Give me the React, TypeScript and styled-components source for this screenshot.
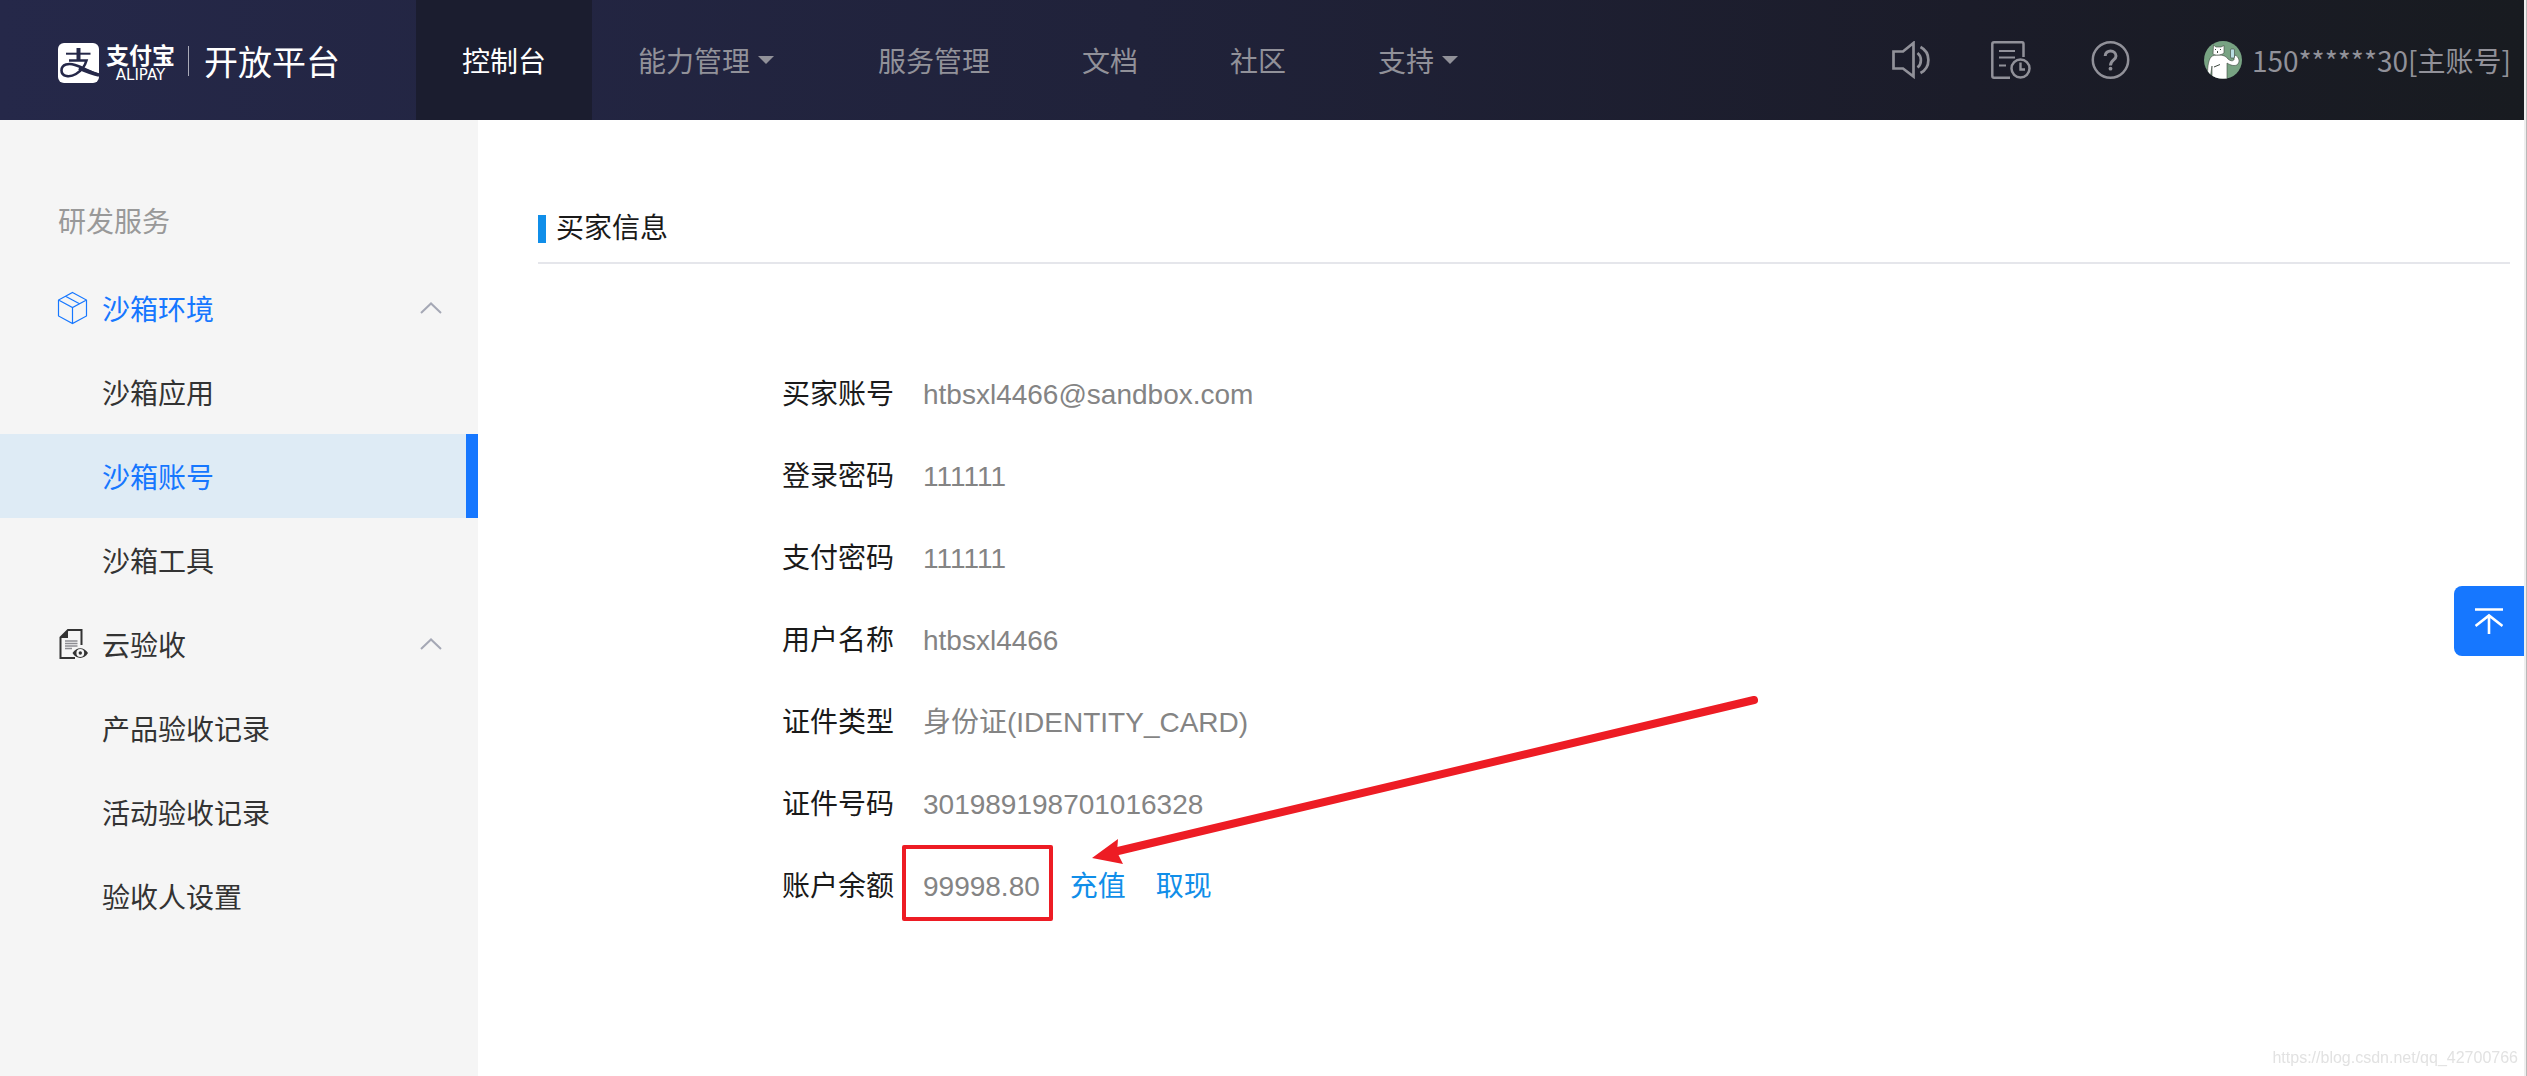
import React from "react";
import styled, { createGlobalStyle, css } from "styled-components";

const latin = `"Liberation Sans", "Noto Sans CJK SC", sans-serif`;
const cjk = `"Noto Sans CJK SC", "Liberation Sans", sans-serif`;

const GlobalStyle = createGlobalStyle`
  * { box-sizing: border-box; }
  body { margin: 0; background: #fff; font-family: ${latin}; font-size: 28px; line-height: 42px; color: #1a1a1a; }
  a { text-decoration: none; color: inherit; }
  button { font: inherit; color: inherit; border: 0; margin: 0; padding: 0; background: none; cursor: pointer; }
  ul, dl, dd, h1, h2 { margin: 0; padding: 0; list-style: none; }
  svg { display: block; flex: none; }
`;

const Page = styled.div`
  min-height: 100vh;
  display: flex;
  flex-direction: column;
  padding-right: 2px;
  border-right: 1px solid #b9b9b9;
  background: #eeeeee;
`;

const Header = styled.header`
  display: flex;
  height: 120px;
  background: linear-gradient(90deg, #252849 0%, #20223a 45%, #1b1c29 78%, #181b20 100%);
  font-family: ${cjk};
  color: #919199;
`;

const Brand = styled.a`
  display: flex;
  align-items: center;
  width: 416px;
  padding: 6px 0 0 58px;
  color: #fff;
`;

const WordMark = styled.span`
  display: flex;
  flex-direction: column;
  align-items: center;
  margin-left: 7px;
  font-size: 23px;
  font-weight: 700;
  line-height: 24px;
`;

const Latin = styled.span`
  font-family: "DejaVu Sans", sans-serif;
  font-size: 15px;
  font-weight: 400;
  line-height: 18px;
`;

const ProductName = styled.span`
  display: flex;
  align-items: center;
  height: 30px;
  margin: 0 0 4px 13px;
  padding-left: 15px;
  border-left: 1px solid #a9aab8;
  font-size: 34px;
  line-height: 34px;
`;

const Nav = styled.nav`
  display: flex;
`;

const NavItem = styled.a<{ $active?: boolean }>`
  display: flex;
  align-items: center;
  padding: 0 46px;
  white-space: nowrap;
  ${(p) => p.$active && css`
    background: #1b1d2f;
    color: #fff;
  `}
`;

const Caret = styled.span`
  margin: 0 12px 0 8px;
  border: 8px solid transparent;
  border-top-color: currentColor;
  border-bottom-width: 0;
`;

const Tools = styled.div`
  display: flex;
  align-items: center;
  gap: 60px;
  margin-left: auto;
  padding-right: 13px;
`;

const Account = styled.button`
  display: flex;
  align-items: center;
  gap: 10px;
  margin-left: 14px;
  white-space: nowrap;
`;

const Body = styled.div`
  flex: 1;
  display: grid;
  grid-template-columns: 478px 1fr;
  background: #fff;
`;

const Sidebar = styled.aside`
  padding-top: 58px;
  background: #f5f5f5;
  font-family: ${cjk};
  color: #333;
`;

const SideTitle = styled.h2`
  height: 88px;
  padding-left: 58px;
  font-size: 28px;
  font-weight: 400;
  line-height: 84px;
  color: #999;
`;

const GroupButton = styled.button<{ $active?: boolean }>`
  display: flex;
  align-items: center;
  width: 100%;
  height: 84px;
  padding: 0 36px 0 57px;
  color: ${(p) => (p.$active ? "#1677ff" : "inherit")};
`;

const GroupIcon = styled.span`
  width: 45px;
`;

const GroupArrow = styled.span`
  margin-left: auto;
  color: #a5a8b5;
`;

const SideLink = styled.a<{ $active?: boolean }>`
  display: flex;
  align-items: center;
  height: 84px;
  padding-left: 102px;
  border-right: 12px solid transparent;
  ${(p) => p.$active && css`
    background: #deebf5;
    border-right-color: #1677ff;
    color: #1677ff;
  `}
`;

const Main = styled.main`
  padding: 88px 14px 0 60px;
`;

const SectionHead = styled.div`
  display: flex;
  align-items: center;
  gap: 10px;
  height: 56px;
  padding-bottom: 12px;
  border-bottom: 2px solid #e5e6eb;

  &::before {
    content: "";
    width: 8px;
    height: 28px;
    background: #108ee9;
  }
`;

const SectionTitle = styled.h1`
  font-size: 28px;
  font-weight: 400;
`;

const Details = styled.dl`
  padding: 90px 0 0 244px;
`;

const Row = styled.div`
  display: flex;
  align-items: center;
  height: 82px;
`;

const Term = styled.dt`
  width: 141px;
`;

const Value = styled.dd`
  position: relative;
  display: flex;
  gap: 30px;
  color: #848484;
`;

const Action = styled.a`
  color: #108ee9;
`;

const Highlight = styled.span`
  position: absolute;
  left: -21px;
  top: -21px;
  width: 151px;
  height: 76px;
  border: 4px solid #ed1c24;
  border-radius: 2px;
  pointer-events: none;
`;

const Pointer = styled.svg`
  position: absolute;
  left: 169px;
  bottom: 43px;
  pointer-events: none;
`;

const BackTop = styled.button`
  position: fixed;
  right: 3px;
  top: 586px;
  display: grid;
  place-items: center;
  width: 70px;
  height: 70px;
  border-radius: 8px 0 0 8px;
  background: #1677ff;
`;

const Watermark = styled.span`
  position: fixed;
  right: 9px;
  bottom: 8px;
  font-size: 16px;
  line-height: 20px;
  color: #e2e2e2;
`;

const LogoMark = () => (
  <svg width="41" height="40" viewBox="0 0 41 40" fill="none" aria-hidden="true">
    <rect width="41" height="40" rx="6" fill="#fff" />
    <g stroke="#252849">
      <path d="M20.500 5V17" strokeWidth="4" />
      <path d="M8 10.700H32.500" strokeWidth="2" />
      <path d="M11 17.500H28.500C27 23 23 28 18 31C12 34.500 3.500 34 3.500 27.500C3.500 21 11 20 17 22C25 24.500 32 29 41 32" strokeWidth="2.600" />
      <path d="M21 25C28 28 34 30.500 41 32" strokeWidth="3.600" />
    </g>
  </svg>
);

const Speaker = () => (
  <svg width="39" height="38" viewBox="0 0 39 38" fill="none" stroke="currentColor" strokeWidth="2.700">
    <path d="M1.500 10.500H11L21.500 2V35.500L11 27.500H1.500Z" />
    <path d="M25.500 12C30 15.500 30 23 25.500 26.500" />
    <path d="M28.500 6C39 11.500 39 26.500 28.500 32" />
  </svg>
);

const Orders = () => (
  <svg width="40" height="38" viewBox="0 0 40 38" fill="none" stroke="currentColor" strokeWidth="2.500">
    <path d="M32.500 16V3Q32.500 1.300 31 1.300H3Q1.300 1.300 1.300 3V35Q1.300 36.700 3 36.700H19" />
    <path d="M8 10H24M8 16.500H24M8 24.500H15" strokeWidth="2" />
    <circle cx="29.500" cy="27.500" r="9" />
    <path d="M29.500 21.500V28.500H34" strokeWidth="2.400" />
  </svg>
);

const Help = () => (
  <svg width="39" height="38" viewBox="0 0 39 38" fill="none" stroke="currentColor" strokeWidth="2.500">
    <circle cx="19.500" cy="19" r="17.700" />
    <path d="M14.200 15C14.200 8.300 25 8.500 25 15C25 19 19.500 19 19.500 24.500" strokeWidth="3" />
    <circle cx="19.500" cy="27.700" r="1.900" fill="currentColor" stroke="none" />
  </svg>
);

const Avatar = () => (
  <svg width="38" height="38" viewBox="0 0 38 38" aria-hidden="true">
    <defs>
      <clipPath id="avatar-round"><circle cx="19" cy="19" r="19" /></clipPath>
    </defs>
    <g clipPath="url(#avatar-round)" stroke="#3c473e" strokeWidth="0.600">
      <rect width="38" height="38" fill="#78a383" stroke="none" />
      <path d="M4 38C3 28 4 20 7 16C9 14 12 14 15 14C19 14 22 15 24 18C27 21 31 20 30 17L31 14C35 16 36 20 34 23C31 26 26 24 23 22L23 38H8L8 25L6 38Z" fill="#fff" />
      <path d="M9 13L9.500 4L12 6H17L20 4.500V12C17 14.500 11 14.500 9 13Z" fill="#fff" />
      <path d="M11 8.500H12M16 8.500H17M13.500 10V12" strokeWidth="1" />
      <rect x="26.500" y="8" width="4" height="9" rx="1" fill="#b9dde3" />
      <path d="M10 26L16 23.500" strokeWidth="1" />
    </g>
  </svg>
);

const BoxIcon = () => (
  <svg width="31" height="34" viewBox="0 0 31 34" fill="none" stroke="currentColor" strokeWidth="1.200">
    <path d="M15.500 1.500L29.500 9V25L15.500 32.500L1.500 25V9ZM1.500 9L15.500 16.500L29.500 9M15.500 16.500V32.500M8.500 5.300L22.500 12.800" />
  </svg>
);

const ReviewIcon = () => (
  <svg width="31" height="32" viewBox="0 0 31 32" fill="none">
    <path d="M24.500 17V2H11L3.500 9.500V30H18" stroke="#333" strokeWidth="2" />
    <path d="M3 10L11 2V10Z" fill="#333" />
    <path d="M8 13H20.500M8 15.500H20.500M8 18H20.500M8 20.500H15" stroke="#8d8d92" strokeWidth="1.600" />
    <path d="M15.500 25C19.500 18.500 27 18.500 31 25C27 31.500 19.500 31.500 15.500 25Z" fill="#333" />
    <circle cx="23.300" cy="25" r="3.900" fill="#f5f5f5" />
    <circle cx="23.300" cy="25" r="1.700" fill="#333" />
  </svg>
);

const Chevron = () => (
  <svg width="22" height="12" viewBox="0 0 22 12" fill="none" stroke="currentColor" strokeWidth="2">
    <path d="M1 11L11 1.500L21 11" />
  </svg>
);

const TopArrow = () => (
  <svg width="28" height="28" viewBox="0 0 28 28" fill="none" stroke="#fff" strokeWidth="2.600">
    <path d="M0 2.500H28M14 27V9M0.500 19L14 8.500L27.500 19" />
  </svg>
);

const navItems = [
  { label: "控制台", active: true },
  { label: "能力管理", menu: true },
  { label: "服务管理" },
  { label: "文档" },
  { label: "社区" },
  { label: "支持", menu: true },
];

const sideGroups = [
  {
    label: "沙箱环境",
    icon: <BoxIcon />,
    active: true,
    items: ["沙箱应用", "沙箱账号", "沙箱工具"],
  },
  {
    label: "云验收",
    icon: <ReviewIcon />,
    active: false,
    items: ["产品验收记录", "活动验收记录", "验收人设置"],
  },
];
const currentPage = "沙箱账号";

const buyer = [
  ["买家账号", "htbsxl4466@sandbox.com"],
  ["登录密码", "111111"],
  ["支付密码", "111111"],
  ["用户名称", "htbsxl4466"],
  ["证件类型", "身份证(IDENTITY_CARD)"],
  ["证件号码", "301989198701016328"],
];

export default function App() {
  return (
    <Page>
      <GlobalStyle />
      <Header>
        <Brand href="#">
          <LogoMark />
          <WordMark>
            支付宝
            <Latin>ALIPAY</Latin>
          </WordMark>
          <ProductName>开放平台</ProductName>
        </Brand>
        <Nav>
          {navItems.map((item) => (
            <NavItem key={item.label} href="#" $active={item.active}>
              {item.label}
              {item.menu && <Caret />}
            </NavItem>
          ))}
        </Nav>
        <Tools>
          <button aria-label="公告"><Speaker /></button>
          <button aria-label="工单"><Orders /></button>
          <button aria-label="帮助"><Help /></button>
          <Account>
            <Avatar />
            150******30[主账号]
          </Account>
        </Tools>
      </Header>
      <Body>
        <Sidebar>
          <SideTitle>研发服务</SideTitle>
          {sideGroups.map((group) => (
            <React.Fragment key={group.label}>
              <GroupButton $active={group.active} aria-expanded="true">
                <GroupIcon>{group.icon}</GroupIcon>
                {group.label}
                <GroupArrow><Chevron /></GroupArrow>
              </GroupButton>
              <ul>
                {group.items.map((item) => (
                  <li key={item}>
                    <SideLink href="#" $active={item === currentPage}>{item}</SideLink>
                  </li>
                ))}
              </ul>
            </React.Fragment>
          ))}
        </Sidebar>
        <Main>
          <SectionHead>
            <SectionTitle>买家信息</SectionTitle>
          </SectionHead>
          <Details>
            {buyer.map(([term, value]) => (
              <Row key={term}>
                <Term>{term}</Term>
                <Value>{value}</Value>
              </Row>
            ))}
            <Row>
              <Term>账户余额</Term>
              <Value>
                <span>99998.80</span>
                <Action href="#">充值</Action>
                <Action href="#">取现</Action>
                <Highlight />
                <Pointer width="668" height="170" viewBox="0 0 668 170" fill="none">
                  <path d="M26 156L662 5" stroke="#ed1c24" strokeWidth="8" strokeLinecap="round" />
                  <path d="M0 163L26 144L25 157L31 169Z" fill="#ed1c24" />
                </Pointer>
              </Value>
            </Row>
          </Details>
        </Main>
      </Body>
      <BackTop aria-label="回到顶部"><TopArrow /></BackTop>
      <Watermark>https://blog.csdn.net/qq_42700766</Watermark>
    </Page>
  );
}
